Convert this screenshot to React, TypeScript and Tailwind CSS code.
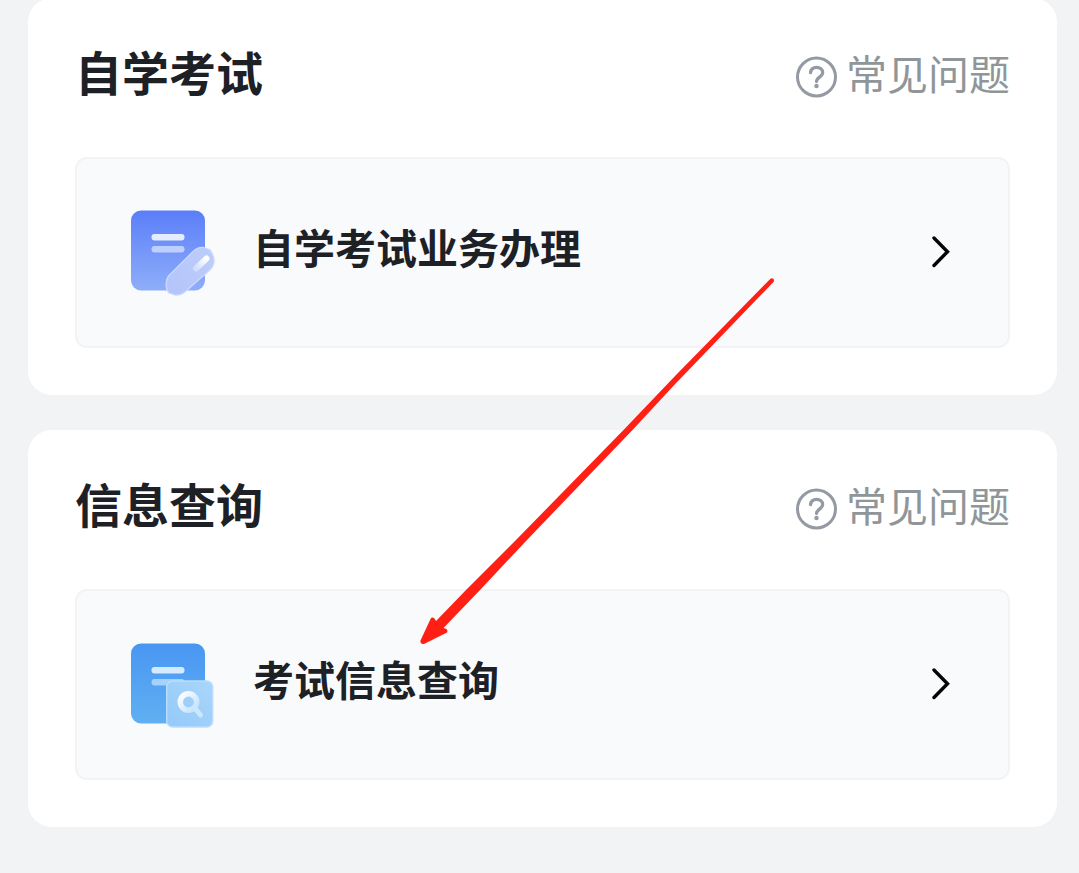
import type { ReactNode } from "react";

function HelpIcon() {
  return (
    <svg width="42" height="42" viewBox="0 0 42 42" fill="none" className="shrink-0" aria-hidden="true">
      <circle cx="20.500" cy="21" r="19" stroke="#9499a3" strokeWidth="3" />
      <path
        d="M14.500 16.700c.400-3.500 2.800-5.400 6-5.400 3.500 0 6.200 2 6.200 5.200 0 4.600-6.200 4.600-6.200 9"
        stroke="#9499a3"
        strokeWidth="3.200"
        strokeLinecap="round"
      />
      <circle cx="20.500" cy="30" r="2.200" fill="#9499a3" />
    </svg>
  );
}

function ChevronIcon() {
  return (
    <svg width="20" height="34" viewBox="0 0 20 34" fill="none" className="shrink-0" aria-hidden="true">
      <path d="M3 2 16.500 15.700 3 29.500" stroke="#050505" strokeWidth="3.400" strokeLinecap="round" strokeLinejoin="miter" />
    </svg>
  );
}

function DocumentPenIcon() {
  return (
    <svg width="86" height="88" viewBox="0 0 86 88" fill="none" className="shrink-0" aria-hidden="true">
      <defs>
        <linearGradient id="penPage" x1="0" y1="0" x2="0" y2="1">
          <stop stopColor="#5b7ef9" />
          <stop offset="1" stopColor="#8eaef8" />
        </linearGradient>
        <linearGradient id="penBody" x1="0" y1="1" x2="1" y2="0">
          <stop stopColor="#b3c4fa" />
          <stop offset="1" stopColor="#bdcdfa" />
        </linearGradient>
        <linearGradient id="penShine" x1="1" y1="0" x2="0" y2="1">
          <stop stopColor="#fff" />
          <stop offset="1" stopColor="#d2dcfd" />
        </linearGradient>
      </defs>
      <rect x="0" y="1.500" width="74" height="80" rx="10" fill="url(#penPage)" />
      <rect x="20.500" y="25" width="33" height="6.500" rx="3" fill="#e4edff" />
      <rect x="20.500" y="37" width="33" height="6.500" rx="3" fill="#bdd0fd" />
      <path
        d="M37.500 67 62 42.500q4.500-4.500 10.500-4l6 2q5 6 4.500 13-.500 4-3.500 7L55 82q-5 4.500-11 4l-6-2q-3-3.500-2.800-9 0-5 2.300-8Z"
        fill="url(#penBody)"
        stroke="#ccd8ff"
        strokeWidth="1.300"
        strokeLinejoin="round"
      />
      <path d="m65 59.500 10.500-10" stroke="url(#penShine)" strokeWidth="6" strokeLinecap="round" />
    </svg>
  );
}

function DocumentSearchIcon() {
  return (
    <svg width="86" height="88" viewBox="0 0 86 88" fill="none" className="shrink-0" aria-hidden="true">
      <defs>
        <linearGradient id="searchPage" x1="0" y1="0" x2="0" y2="1">
          <stop stopColor="#4996f2" />
          <stop offset="1" stopColor="#60b0f2" />
        </linearGradient>
        <linearGradient id="searchTile" x1="0" y1="1" x2="1" y2="0">
          <stop stopColor="#93c9fa" />
          <stop offset="1" stopColor="#aad6f9" />
        </linearGradient>
        <linearGradient id="searchLens" x1="0" y1="0" x2="1" y2="1">
          <stop stopColor="#fff" />
          <stop offset="1" stopColor="#bee0fd" />
        </linearGradient>
      </defs>
      <rect x="0" y="2.500" width="74" height="80" rx="10" fill="url(#searchPage)" />
      <rect x="20.500" y="26" width="33" height="6.500" rx="3" fill="#d5eaff" />
      <rect x="20.500" y="38" width="33" height="6.500" rx="3" fill="#a7d0fb" />
      <rect x="35.700" y="40" width="46" height="46" rx="6" fill="url(#searchTile)" stroke="#b9ddff" strokeWidth="1.400" />
      <circle cx="57.500" cy="61" r="8.200" stroke="url(#searchLens)" strokeWidth="5.500" />
      <path d="m64.500 68 5 6" stroke="#cde7fe" strokeWidth="5" strokeLinecap="round" />
    </svg>
  );
}

function PointerArrow() {
  return (
    <svg
      width="356"
      height="370"
      viewBox="0 0 356 370"
      className="pointer-events-none absolute top-[276px] left-[419px]"
      aria-hidden="true"
    >
      <path
        d="M351.500 2.700q1.500-1 3 .300 1 1.500 0 3L262 102 258.500 105.500 213.500 154 108 264 62 313 24.500 352l3 1q1.500 1.500.500 3.500L5 368q-4 .500-3.500-3.500L11.500 343q1.500-2.500 4-.500l1.500 2.500L48 313 97 264 204.500 154 257 99Z"
        fill="#ff2015"
      />
    </svg>
  );
}

function Section({ title, action, icon }: { title: string; action: string; icon: ReactNode }) {
  return (
    <section className="rounded-3xl bg-white px-[47px] pt-9 pb-[47px]">
      <header className="flex h-20 items-center justify-between">
        <h2 className="pb-2 text-[47px] leading-none font-bold text-[#1d2126]">{title}</h2>
        <a href="#faq" className="flex items-center gap-2 text-[41px] leading-none text-[#8f9699]">
          <span className="pt-1.5">
            <HelpIcon />
          </span>
          <span className="pb-1">常见问题</span>
        </a>
      </header>
      <button
        type="button"
        className="mt-[43px] flex h-[191px] w-full items-center rounded-xl border-2 border-[#f2f3f5] bg-[#f9fafc] pr-[57px] pl-[54px] text-left"
      >
        {icon}
        <span className="ml-9 flex-1 pb-3 text-[41px] leading-none font-bold text-[#1d2126]">{action}</span>
        <ChevronIcon />
      </button>
    </section>
  );
}

export default function App() {
  return (
    <div className="relative min-h-screen overflow-hidden bg-[#f2f3f5] font-['Noto_Sans_CJK_SC',sans-serif]">
      <main className="-mt-0.5 flex flex-col gap-[35px] pr-[22px] pb-11 pl-7">
        <Section title="自学考试" action="自学考试业务办理" icon={<DocumentPenIcon />} />
        <Section title="信息查询" action="考试信息查询" icon={<DocumentSearchIcon />} />
      </main>
      <PointerArrow />
    </div>
  );
}
